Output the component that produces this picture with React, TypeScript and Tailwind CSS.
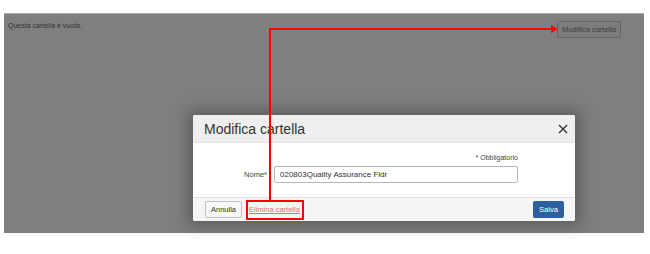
import React from "react";

export default function App() {
  return (
    <div className="h-[254px] w-[650px] bg-white pt-[13px] pl-[4px] font-['Liberation_Sans',Arial,sans-serif]">
      <div className="relative h-[220px] w-[640px] border-t border-[#a8a8a8] bg-[#7f7f7f]">
        {/* page behind the overlay */}
        <div className="flex items-start justify-between pt-[7px] pr-[23px] pl-[4px]">
          <p className="text-[7px] leading-[10px] text-[#333]">Questa cartella è vuota.</p>
          <button
            type="button"
            className="h-[17px] w-[64px] rounded-[2px] border border-[#666] bg-[#7c7c7c] text-[7.5px] leading-[15px] text-[#404040]"
          >
            Modifica cartella
          </button>
        </div>

        {/* modal */}
        <div className="absolute top-[101px] left-[189px] flex h-[106px] w-[382px] flex-col overflow-hidden rounded-[2px] bg-white shadow-[0_0_14px_6px_rgba(60,60,60,0.45)]">
          <div className="flex h-[28px] items-center justify-between border-b border-[#e2e2e2] bg-[#efefef] pr-[7px] pl-[11px]">
            <h2 className="text-[14px] leading-[18px] text-[#333]">Modifica cartella</h2>
            <svg width="10" height="10" viewBox="0 0 10 10" className="text-[#333]">
              <path d="M1 1 L9 9 M9 1 L1 9" stroke="currentColor" strokeWidth="1.4" />
            </svg>
          </div>
          <div className="flex flex-1 flex-col bg-white pt-[10px] pr-[57px]">
            <p className="text-right text-[7px] leading-[10px] text-[#444]">* Obbligatorio</p>
            <div className="mt-[3px] flex items-center justify-end gap-[7px]">
              <label className="text-[7.5px] text-[#444]">Nome*</label>
              <div className="flex h-[17px] w-[244px] items-center rounded-[2px] border border-[#b5b5b5] bg-white px-[5px] text-[8px] text-[#333]">
                020803Quality Assurance Fldr
              </div>
            </div>
          </div>
          <div className="flex h-[24px] items-center justify-between border-t border-[#e0e0e0] bg-[#f5f5f5] pr-[11px] pl-[12px]">
            <div className="flex items-center gap-[7px]">
              <button
                type="button"
                className="h-[17px] w-[37px] rounded-[2px] border border-[#c4c4c4] bg-[#f7f7f7] text-[7.5px] text-[#333]"
              >
                Annulla
              </button>
              <a className="text-[7.5px] text-[#e0706c] underline">Elimina cartella</a>
            </div>
            <button
              type="button"
              className="h-[17px] w-[31px] rounded-[2px] bg-[#2b5f9f] text-[7.5px] text-white"
            >
              Salva
            </button>
          </div>
        </div>

        {/* red annotations */}
        <div className="absolute top-[14px] left-[265px] h-[2px] w-[285px] bg-[#ff0000]" />
        <div className="absolute top-[11px] left-[547px] h-0 w-0 border-y-[4px] border-l-[7px] border-y-transparent border-l-[#ff0000]" />
        <div className="absolute top-[14px] left-[265px] h-[173px] w-[2px] bg-[#ff0000]" />
        <div className="absolute top-[186px] left-[242px] h-[20px] w-[58px] border-2 border-[#ff0000]" />
      </div>
    </div>
  );
}
